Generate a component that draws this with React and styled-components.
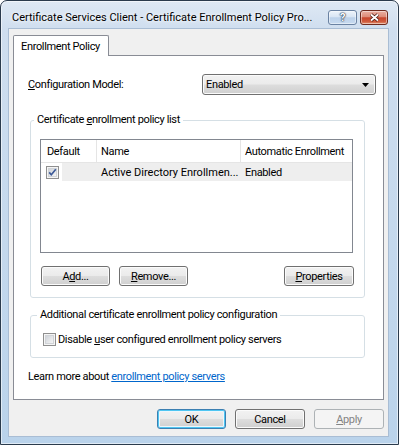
import styled, { createGlobalStyle } from 'styled-components'

const GlobalStyle = createGlobalStyle`
  html, body {
    margin: 0;
    padding: 0;
    background: #ffffff;
  }
  body {
    font-family: Roboto, "Liberation Sans", sans-serif;
    font-size: 11px;
    letter-spacing: -0.35px;
    color: #000000;
  }
  * {
    box-sizing: border-box;
  }
`

/* the aero frame round the dialog */
const Window = styled.div`
  width: 399px;
  height: 445px;
  display: flex;
  flex-direction: column;
  border: 1px solid #2b3b4d;
  border-radius: 7px 7px 0 0;
  background: linear-gradient(180deg, #dfe9f4 0%, #cfdeef 28px, #bad3eb 100%);
  box-shadow: inset 0 0 0 1px rgba(255, 255, 255, 0.55);
  overflow: hidden;
`

const TitleBar = styled.div`
  height: 27px;
  flex-shrink: 0;
  display: flex;
  align-items: center;
  justify-content: space-between;
  padding: 6px 10px 0 11px;
`

const Title = styled.div`
  white-space: nowrap;
  letter-spacing: 0;
  text-shadow: 0 0 6px #ffffff, 0 0 3px #ffffff;
`

const CaptionButtons = styled.div`
  display: flex;
  gap: 3px;
`

const CaptionButton = styled.div`
  width: ${({ $width }) => $width}px;
  height: 15px;
  display: flex;
  align-items: center;
  justify-content: center;
  border-radius: 3px;
  border: 1px solid ${({ $close }) => ($close ? '#6e2a1e' : '#6a82a2')};
  background: ${({ $close }) =>
    $close
      ? 'linear-gradient(180deg, #eab0a2 0%, #de8c78 45%, #c8462c 52%, #cf5a3c 80%, #e39270 100%)'
      : 'linear-gradient(180deg, #eef4fb 0%, #d9e6f4 45%, #bcd1ea 52%, #c8dbf0 100%)'};
  box-shadow: inset 0 0 0 1px rgba(255, 255, 255, 0.45);
  color: #ffffff;
  font-weight: bold;
  font-size: 11px;
  text-shadow: 0 0 1px #24364f, 0 0 1px #24364f, 0 0 2px #24364f;
`

const Client = styled.div`
  flex: 1;
  margin: 0 9px 7px 7px;
  padding: 6px 4px 7px 4px;
  display: flex;
  flex-direction: column;
  background: #f0f0f0;
  border: 1px solid #a9bdd4;
`

const TabStrip = styled.div`
  display: flex;
`

const Tab = styled.div`
  position: relative;
  z-index: 1;
  height: 21px;
  margin-bottom: -1px;
  padding: 0 8px 0 7px;
  display: flex;
  align-items: center;
  background: #ffffff;
  border: 1px solid #898c95;
  border-bottom: none;
  border-radius: 2px 2px 0 0;
`

const Panel = styled.div`
  flex: 1;
  display: flex;
  flex-direction: column;
  padding: 18px 7px 0 14px;
  background: #ffffff;
  border: 1px solid #898c95;
`

const ConfigRow = styled.div`
  display: flex;
  align-items: center;
  justify-content: space-between;
  height: 21px;
`

const buttonFace = `
  border: 1px solid #707070;
  border-radius: 3px;
  background: linear-gradient(180deg, #f2f2f2 0%, #ebebeb 48%, #dddddd 52%, #cfcfcf 100%);
  box-shadow: inset 0 0 0 1px #fbfbfb;
`

const Combo = styled.div`
  width: 174px;
  height: 21px;
  display: flex;
  align-items: center;
  justify-content: space-between;
  padding: 0 6px 0 3px;
  ${buttonFace}
`

const GroupBox = styled.fieldset`
  margin: ${({ $top }) => $top}px 11px 0 2px;
  padding: ${({ $pad }) => $pad};
  min-width: 0;
  border: 1px solid #d5dfe5;
  border-radius: 3px;
`

const Legend = styled.legend`
  margin-left: -6px;
  padding: 0 3px;
  line-height: 14px;
`

const ListView = styled.div`
  height: 114px;
  background: #ffffff;
  border: 1px solid #828790;
`

const ListRow = styled.div`
  display: grid;
  grid-template-columns: 56px 144px 1fr;
  align-items: center;
  height: ${({ $header }) => ($header ? 23 : 18)}px;
  border-bottom: ${({ $header }) => ($header ? '1px solid #e5e5e5' : 'none')};
  background: ${({ $selected }) =>
    $selected ? 'linear-gradient(90deg, transparent 21px, #eeeeee 21px)' : 'transparent'};
`

const HeaderCell = styled.div`
  height: 100%;
  display: flex;
  align-items: center;
  padding-left: ${({ $first }) => ($first ? 6 : 4)}px;
  border-right: ${({ $last }) => ($last ? 'none' : '1px solid #e5e5e5')};
  white-space: nowrap;
`

const Cell = styled.div`
  display: flex;
  align-items: center;
  padding-left: ${({ $pad }) => $pad}px;
  white-space: nowrap;
  overflow: hidden;
  letter-spacing: ${({ $loose }) => ($loose ? '0' : '-0.35px')};
`

const ButtonRow = styled.div`
  display: flex;
  gap: 9px;
  margin-top: ${({ $top }) => $top}px;
  justify-content: ${({ $end }) => ($end ? 'flex-end' : 'flex-start')};
`

const Button = styled.div`
  width: ${({ $width }) => $width || 69}px;
  height: 20px;
  display: flex;
  align-items: center;
  justify-content: center;
  ${buttonFace}
  margin-left: ${({ $push }) => ($push ? 'auto' : '0')};
  margin-right: ${({ $push }) => ($push ? '-1px' : '0')};
  ${({ $default }) =>
    $default &&
    `
    border-color: #3c7fb1;
    box-shadow: inset 0 0 0 1px #4fc6f2, inset 0 0 0 2px #eef6fb;
  `}
  ${({ $disabled }) =>
    $disabled &&
    `
    border-color: #adb2b5;
    background: #f4f4f4;
    box-shadow: none;
    color: #838383;
  `}
`

const CheckLine = styled.div`
  display: flex;
  align-items: center;
  gap: 2px;
  height: 16px;
`

const LinkLine = styled.div`
  margin-top: 12px;
  line-height: 14px;
`

const Link = styled.span`
  color: #0066cc;
  text-decoration: underline;
`

function CheckBox({ checked }) {
  return (
    <svg width="13" height="13" viewBox="0 0 13 13">
      <defs>
        <linearGradient id={checked ? 'cbOn' : 'cbOff'} x1="0" y1="0" x2="1" y2="1">
          <stop offset="0" stopColor="#cdd1d7" />
          <stop offset="1" stopColor="#f7f7f7" />
        </linearGradient>
      </defs>
      <rect x="0.5" y="0.5" width="12" height="12" fill="#f5f5f5" stroke="#8f8f8f" />
      <rect x="2.5" y="2.5" width="8" height="8" fill={`url(#${checked ? 'cbOn' : 'cbOff'})`} stroke="#d0d3d7" />
      {checked && (
        <path d="M3.2 6.4 L5.3 8.8 L9.8 3.2" fill="none" stroke="#3d5a98" strokeWidth="1.7" />
      )}
    </svg>
  )
}

function App() {
  return (
    <>
      <GlobalStyle />
      <Window>
        <TitleBar>
          <Title>Certificate Services Client - Certificate Enrollment Policy Pro...</Title>
          <CaptionButtons>
            <CaptionButton $width={29}>?</CaptionButton>
            <CaptionButton $width={28} $close>
              <svg width="11" height="9" viewBox="0 0 11 9">
                <path d="M2 1.5 L9 7.5 M9 1.5 L2 7.5" stroke="#4a1a12" strokeWidth="3.4" />
                <path d="M2 1.5 L9 7.5 M9 1.5 L2 7.5" stroke="#ffffff" strokeWidth="1.8" />
              </svg>
            </CaptionButton>
          </CaptionButtons>
        </TitleBar>

        <Client>
          <TabStrip>
            <Tab>Enrollment Policy</Tab>
          </TabStrip>

          <Panel>
            <ConfigRow>
              <span>
                <u>C</u>onfiguration Model:
              </span>
              <Combo>
                <span>Enabled</span>
                <svg width="7" height="4" viewBox="0 0 7 4">
                  <path d="M0 0 H7 L3.5 4 Z" fill="#000000" />
                </svg>
              </Combo>
            </ConfigRow>

            <GroupBox $top={18} $pad="12px 11px 11px 9px">
              <Legend>
                Certificate <u>e</u>nrollment policy list
              </Legend>
              <ListView>
                <ListRow $header>
                  <HeaderCell $first>Default</HeaderCell>
                  <HeaderCell>Name</HeaderCell>
                  <HeaderCell $last>Automatic Enrollment</HeaderCell>
                </ListRow>
                <ListRow $selected>
                  <Cell $pad={5}>
                    <CheckBox checked />
                  </Cell>
                  <Cell $pad={4} $loose>
                    Active Directory Enrollmen...
                  </Cell>
                  <Cell $pad={4}>Enabled</Cell>
                </ListRow>
              </ListView>
              <ButtonRow $top={13}>
                <Button style={{ marginLeft: 1 }}>
                  A<u>d</u>d...
                </Button>
                <Button>
                  <u>R</u>emove...
                </Button>
                <Button $width={70} $push>
                  <u>P</u>roperties
                </Button>
              </ButtonRow>
            </GroupBox>

            <GroupBox $top={10} $pad="9px 11px 10px 12px">
              <Legend>Additional certificate enrollment policy configuration</Legend>
              <CheckLine>
                <CheckBox />
                <span>
                  Disable <u>u</u>ser configured enrollment policy servers
                </span>
              </CheckLine>
            </GroupBox>

            <LinkLine>
              Learn more about <Link>enrollment policy servers</Link>
            </LinkLine>
          </Panel>

          <ButtonRow $top={9} $end>
            <Button $default>OK</Button>
            <Button $width={70}>Cancel</Button>
            <Button $width={70} $disabled>
              <u>A</u>pply
            </Button>
          </ButtonRow>
        </Client>
      </Window>
    </>
  )
}

export default App
